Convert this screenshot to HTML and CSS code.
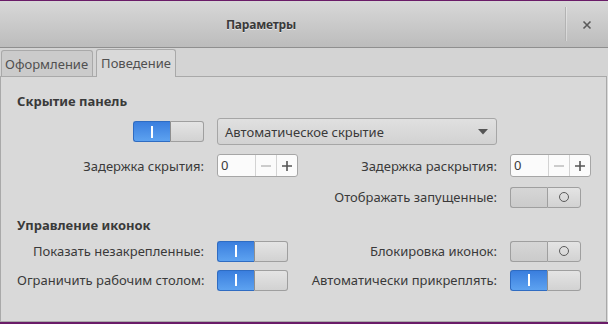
FILE: index.html
```html
<!DOCTYPE html>
<html lang="ru">
<head>
    <meta charset="UTF-8">
    <title>Параметры</title>
    <link rel="stylesheet" href="styles.css">
</head>
<body>

    <div class="window">
        <header class="titlebar">
            <span class="title">Параметры</span>
            <span class="sep"></span>
            <span class="close">
                <svg width="10" height="10" viewBox="0 0 10 10"><path d="M1.5 1.5 L8.5 8.5 M8.5 1.5 L1.5 8.5" stroke="#5a5a5a" stroke-width="1.6"/></svg>
            </span>
        </header>

        <nav class="tabs">
            <span class="tab">Оформление</span>
            <span class="tab active">Поведение</span>
        </nav>

        <main class="panel">
            <section class="group first">
                <h3>Скрытие панель</h3>
                <div class="grid">
                    <span class="switch on end"><span class="track"><i></i></span><span class="knob"></span></span>
                    <div class="combo">
                        <span>Автоматическое скрытие</span>
                        <svg width="10" height="6" viewBox="0 0 10 6"><path d="M0 0 H10 L5 5.5 Z" fill="#555"/></svg>
                    </div>
                    <span></span>

                    <label>Задержка скрытия:</label>
                    <div class="spin">
                        <span class="value">0</span>
                        <span class="btn"><svg width="10" height="10" viewBox="0 0 10 10"><path d="M0 5 H10" stroke="#b8b8b8" stroke-width="1.4"/></svg></span>
                        <span class="btn"><svg width="10" height="10" viewBox="0 0 10 10"><path d="M0 5 H10 M5 0 V10" stroke="#555" stroke-width="1.6"/></svg></span>
                    </div>
                    <label>Задержка раскрытия:</label>
                    <div class="spin">
                        <span class="value">0</span>
                        <span class="btn"><svg width="10" height="10" viewBox="0 0 10 10"><path d="M0 5 H10" stroke="#b8b8b8" stroke-width="1.4"/></svg></span>
                        <span class="btn"><svg width="10" height="10" viewBox="0 0 10 10"><path d="M0 5 H10 M5 0 V10" stroke="#555" stroke-width="1.6"/></svg></span>
                    </div>

                    <span></span>
                    <span></span>
                    <label>Отображать запущенные:</label>
                    <span class="switch off"><span class="track"></span><span class="knob"><b></b></span></span>
                </div>
            </section>

            <section class="group second">
                <h3>Управление иконок</h3>
                <div class="grid">
                    <label>Показать незакрепленные:</label>
                    <span class="switch on"><span class="track"><i></i></span><span class="knob"></span></span>
                    <label>Блокировка иконок:</label>
                    <span class="switch off"><span class="track"></span><span class="knob"><b></b></span></span>

                    <label>Ограничить рабочим столом:</label>
                    <span class="switch on"><span class="track"><i></i></span><span class="knob"></span></span>
                    <label>Автоматически прикреплять:</label>
                    <span class="switch on"><span class="track"><i></i></span><span class="knob"></span></span>
                </div>
            </section>
        </main>
    </div>

</body>
</html>
```

FILE: styles.css
```css
* {
    box-sizing: border-box;
    margin: 0;
    padding: 0;
}

body {
    background: #6a1c68;
    font-family: "Noto Sans", sans-serif;
    font-size: 13px;
    color: #3a3a3a;
    padding-top: 1px;
}

.window {
    height: 321px;
    display: flex;
    flex-direction: column;
    background: #d9d9d9;
}

/* Title bar */
.titlebar {
    height: 47px;
    display: flex;
    align-items: center;
    background: linear-gradient(#d8d8d8, #bcbcbc);
    border-bottom: 1px solid #8f8f8f;
}

.title {
    width: 522px;
    text-align: center;
    font-weight: bold;
    font-size: 12px;
    letter-spacing: -0.2px;
    color: #3a3a3a;
    text-shadow: 0 1px 0 rgba(255, 255, 255, 0.6);
}

.sep {
    width: 1px;
    height: 34px;
    margin-left: 43px;
    background: #b3b3b3;
    box-shadow: 1px 0 0 rgba(255, 255, 255, 0.35);
}

.close {
    width: 42px;
    display: flex;
    justify-content: center;
    padding-top: 1px;
}

/* Tabs */
.tabs {
    height: 28px;
    display: flex;
    align-items: flex-end;
    gap: 3px;
    background: #d4d4d4;
    padding-left: 1px;
    position: relative;
    z-index: 1;
}

.tab {
    height: 26px;
    padding: 4px 4px 0 3px;
    background: #cbcbcb;
    border: 1px solid #a9a9a9;
    border-bottom: none;
    border-radius: 3px 3px 0 0;
    color: #505050;
}

.tab.active {
    height: 28px;
    padding: 4px 4px 0 4px;
    background: #d9d9d9;
    margin-bottom: -1px;
}

/* Panel */
.panel {
    flex: 1;
    border: 1px solid #a9a9a9;
    margin-right: 1px;
    padding: 15px 0 0 16px;
}

.group h3 {
    font-size: 13px;
    font-weight: bold;
    line-height: 18px;
    color: #3a3a3a;
}

.grid {
    display: grid;
    grid-template-columns: 187px 81px 186px 81px;
    column-gap: 13px;
    align-items: center;
}

.first h3 {
    margin-bottom: 8px;
}

.first .grid {
    grid-template-rows: 27px 23px 22px;
    row-gap: 9px;
}

.second {
    margin-top: 8px;
}

.second h3 {
    margin-bottom: 6px;
}

.second .grid {
    grid-template-rows: 22px 22px;
    row-gap: 7px;
}

label {
    text-align: right;
    white-space: nowrap;
}

/* Switch */
.switch {
    display: flex;
    width: 71px;
    height: 21px;
}

.switch.end {
    justify-self: end;
}

.switch .track {
    width: 37px;
    display: flex;
    align-items: center;
    justify-content: center;
    border: 1px solid #9f9f9f;
    border-right: none;
    border-radius: 3px 0 0 3px;
}

.switch .knob {
    flex: 1;
    display: flex;
    align-items: center;
    justify-content: center;
    border: 1px solid #9f9f9f;
    border-radius: 0 3px 3px 0;
    background: linear-gradient(#e4e4e4, #d2d2d2);
}

.switch.on .track {
    background: linear-gradient(#3a7ede, #5da2f0);
    border-color: #2f6cc2;
}

.switch.on .track i {
    width: 2px;
    height: 12px;
    background: #fff;
}

.switch.on .knob {
    border-left-color: #8e8e8e;
}

.switch.off .track {
    background: linear-gradient(#d6d6d6, #cbcbcb);
}

.switch.off .knob b {
    width: 10px;
    height: 10px;
    border: 1px solid #5a5a5a;
    border-radius: 50%;
}

/* Combo box */
.combo {
    grid-column: 2 / 4;
    height: 27px;
    display: flex;
    align-items: center;
    justify-content: space-between;
    padding: 0 8px 0 7px;
    background: linear-gradient(#e0e0e0, #d2d2d2);
    border: 1px solid #a6a6a6;
    border-radius: 3px;
}

/* Spin button */
.spin {
    display: flex;
    height: 23px;
    background: #fbfbfb;
    border: 1px solid #a6a6a6;
    border-radius: 3px;
}

.spin .value {
    width: 37px;
    padding-left: 3px;
    line-height: 21px;
}

.spin .btn {
    flex: 1;
    display: flex;
    align-items: center;
    justify-content: center;
    border-left: 1px solid #d3d3d3;
}
```
